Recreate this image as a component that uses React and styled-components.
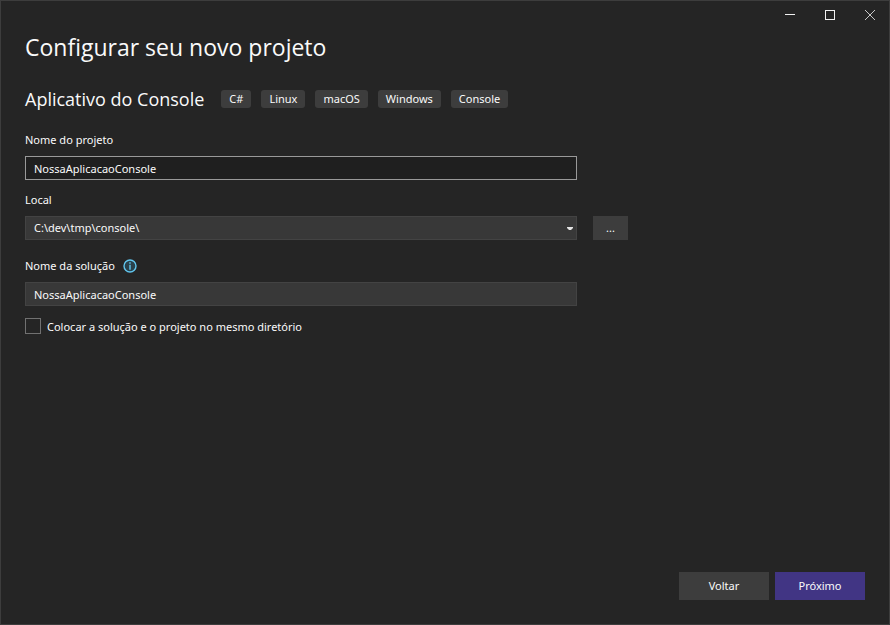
import React, { useState } from "react";
import styled, { createGlobalStyle } from "styled-components";

const GlobalStyle = createGlobalStyle`
  *, *::before, *::after { box-sizing: border-box; }
  body {
    margin: 0;
    background: #252525;
    color: #fafafa;
    font: 11px/16px "Noto Sans", "Open Sans", sans-serif;
  }
  button, input, select { font: inherit; color: inherit; }
`;

const Window = styled.div`
  display: flex;
  flex-direction: column;
  min-height: 100vh;
  border: 1px solid #3d3d3d;
`;

const TitleBar = styled.header`
  display: flex;
  justify-content: flex-end;
  height: 28px;
`;

const CaptionButton = styled.button`
  display: grid;
  place-items: center;
  width: 40px;
  height: 28px;
  padding: 0;
  border: 0;
  background: transparent;
  color: ${(p) => (p.$soft ? "#c8c8c8" : "#f1f1f1")};
  &:last-child { width: 39px; }
  &:hover { background: #3d3d3d; }
`;

const Content = styled.main`
  flex: 1;
  padding: 0 24px;
`;

const Title = styled.h1`
  margin: 0;
  font-family: "Open Sans", "Noto Sans", sans-serif;
  font-size: 23px;
  font-weight: 400;
  line-height: 36px;
`;

const Template = styled.div`
  display: flex;
  flex-wrap: wrap;
  align-items: center;
  gap: 17px;
  margin: 20px 0 18px;
`;

const TemplateName = styled.h2`
  margin: 0;
  font-family: "Open Sans", "Noto Sans", sans-serif;
  font-size: 18px;
  font-weight: 400;
  line-height: 28px;
`;

const Tags = styled.ul`
  display: flex;
  gap: 10px;
  margin: 0;
  padding: 0;
  list-style: none;
`;

const Tag = styled.li`
  padding: 0 8px;
  border-radius: 3px;
  background: #3d3d3d;
  line-height: 18px;
`;

const Field = styled.div`
  display: grid;
  grid-template-columns: minmax(0, 552px) 35px;
  column-gap: 16px;
  row-gap: 8px;
  margin-bottom: ${(p) => (p.$spacious ? 17 : 11)}px;
`;

const LabelRow = styled.div`
  grid-column: 1 / -1;
  display: flex;
  align-items: center;
  gap: 8px;
  height: 17px;
`;

const TextInput = styled.input`
  width: 100%;
  height: 24px;
  padding: 0 8px;
  border: 1px solid #434343;
  border-radius: 0;
  outline: 0;
  background: #383838;
  &[data-active="true"] {
    border-color: #999999;
    background: #1f1f1f;
  }
`;

const SelectBox = styled.div`
  display: grid;
  align-items: center;
  > * { grid-area: 1 / 1; }
  > svg {
    justify-self: end;
    margin-right: 4px;
    pointer-events: none;
  }
`;

const Select = styled.select`
  appearance: none;
  width: 100%;
  height: 24px;
  padding: 0 20px 0 8px;
  border: 1px solid #434343;
  border-radius: 0;
  outline: 0;
  background: #383838;
`;

const Button = styled.button`
  width: ${(p) => (p.$compact ? "35px" : "90px")};
  height: ${(p) => (p.$compact ? "24px" : "28px")};
  padding: 0;
  border: 0;
  background: ${(p) => (p.$primary ? "#413584" : "#3d3d3d")};
`;

const InfoButton = styled.button`
  display: flex;
  padding: 0;
  border: 0;
  background: transparent;
`;

const CheckRow = styled.div`
  display: flex;
  align-items: flex-start;
  gap: 6px;
  padding-top: 1px;
  line-height: 18px;
`;

const Checkbox = styled.input`
  appearance: none;
  width: 16px;
  height: 16px;
  margin: 0;
  border: 1px solid #717171;
  background: #252525;
  &:checked { background: #9184ee; }
`;

const Footer = styled.footer`
  display: flex;
  justify-content: flex-end;
  gap: 6px;
  padding: 24px;
`;

const tags = ["C#", "Linux", "macOS", "Windows", "Console"];

export default function App() {
  const [project, setProject] = useState("NossaAplicacaoConsole");
  const [solution, setSolution] = useState("NossaAplicacaoConsole");

  return (
    <Window>
      <GlobalStyle />
      <TitleBar>
        <CaptionButton aria-label="Minimizar">
          <svg width="10" height="10" shapeRendering="crispEdges">
            <path d="M0 4h10v1H0z" fill="currentColor" />
          </svg>
        </CaptionButton>
        <CaptionButton aria-label="Maximizar">
          <svg width="10" height="10" shapeRendering="crispEdges">
            <path d="M.5.5h9v9h-9z" fill="none" stroke="currentColor" />
          </svg>
        </CaptionButton>
        <CaptionButton $soft aria-label="Fechar">
          <svg width="10" height="10">
            <path d="M0 0l10 10M10 0L0 10" stroke="currentColor" />
          </svg>
        </CaptionButton>
      </TitleBar>
      <Content>
        <Title>Configurar seu novo projeto</Title>
        <Template>
          <TemplateName>Aplicativo do Console</TemplateName>
          <Tags>
            {tags.map((tag) => (
              <Tag key={tag}>{tag}</Tag>
            ))}
          </Tags>
        </Template>
        <Field>
          <LabelRow>
            <label htmlFor="project">Nome do projeto</label>
          </LabelRow>
          <TextInput
            id="project"
            data-active="true"
            value={project}
            onChange={(e) => setProject(e.target.value)}
          />
        </Field>
        <Field $spacious>
          <LabelRow>
            <label htmlFor="location">Local</label>
          </LabelRow>
          <SelectBox>
            <Select id="location">
              <option>C:\dev\tmp\console\</option>
            </Select>
            <svg width="6" height="3">
              <path d="M0 0h6v1L4 3H2L0 1z" fill="#e4e4e4" />
            </svg>
          </SelectBox>
          <Button $compact aria-label="Procurar local">...</Button>
        </Field>
        <Field>
          <LabelRow>
            <label htmlFor="solution">Nome da solução</label>
            <InfoButton aria-label="Informações sobre a solução">
              <svg width="14" height="14" viewBox="0 0 14 14">
                <circle cx="7" cy="7" r="6" fill="#29414b" stroke="#61c6ef" strokeWidth="1.4" />
                <path d="M6.3 3.2h1.4v1.5H6.3zM6.3 5.8h1.4v4.9H6.3z" fill="#61c6ef" />
              </svg>
            </InfoButton>
          </LabelRow>
          <TextInput
            id="solution"
            value={solution}
            onChange={(e) => setSolution(e.target.value)}
          />
        </Field>
        <CheckRow>
          <Checkbox type="checkbox" id="same-directory" />
          <label htmlFor="same-directory">Colocar a solução e o projeto no mesmo diretório</label>
        </CheckRow>
      </Content>
      <Footer>
        <Button>Voltar</Button>
        <Button $primary>Próximo</Button>
      </Footer>
    </Window>
  );
}
